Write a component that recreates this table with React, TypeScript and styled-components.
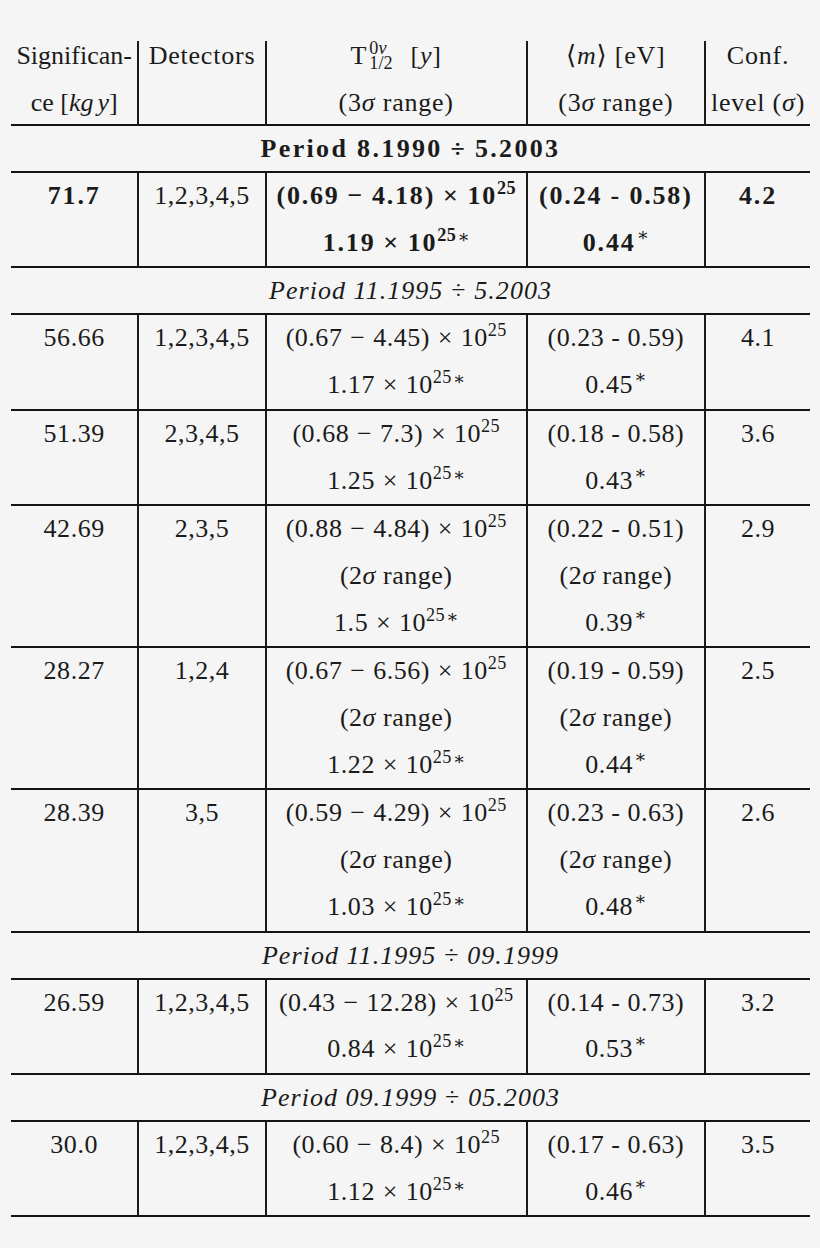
import React from 'react';
import styled, { createGlobalStyle } from 'styled-components';

const GlobalStyle = createGlobalStyle`
  html,
  body {
    margin: 0;
    padding: 0;
    background: #f5f5f5;
  }
  body {
    font-family: 'Liberation Serif', 'DejaVu Serif', serif;
    color: #1b1b1b;
  }
`;

type DataRowProps = {
  kind: 'data';
  bold?: boolean;
  sig: string;
  det: string;
  half: React.ReactNode[];
  mass: React.ReactNode[];
  conf: string;
};

type PeriodRowProps = {
  kind: 'period';
  bold?: boolean;
  from: string;
  to: string;
};

const I = styled.i`
  font-style: italic;
`;

const Op = styled.span`
  font-style: normal;
  margin: 0 0.3em;
`;

const Sup = styled.sup`
  font-size: 0.7em;
  line-height: 0;
  vertical-align: 10px;
  letter-spacing: 0.02em;
`;

const Ast = styled.sup<{ $raise: number }>`
  font-size: 0.7em;
  line-height: 0;
  vertical-align: ${(p) => p.$raise}px;
  font-weight: 400;
  letter-spacing: 0;
  margin-left: 1px;
`;

const range = (a: string, b: string) => (
  <>
    ({a}
    <Op>−</Op>
    {b})<Op>×</Op>10<Sup>25</Sup>
  </>
);

const central = (v: string) => (
  <>
    {v}
    <Op>×</Op>10<Sup>25</Sup>
    <Ast $raise={8}>∗</Ast>
  </>
);

const mass = (v: string) => (
  <>
    {v}
    <Ast $raise={10}>∗</Ast>
  </>
);

const twoSigma = (
  <>
    (2<I>σ</I> range)
  </>
);

const rows: (DataRowProps | PeriodRowProps)[] = [
  { kind: 'period', bold: true, from: '8.1990', to: '5.2003' },
  {
    kind: 'data',
    bold: true,
    sig: '71.7',
    det: '1,2,3,4,5',
    half: [range('0.69', '4.18'), central('1.19')],
    mass: ['(0.24 - 0.58)', mass('0.44')],
    conf: '4.2',
  },
  { kind: 'period', from: '11.1995', to: '5.2003' },
  {
    kind: 'data',
    sig: '56.66',
    det: '1,2,3,4,5',
    half: [range('0.67', '4.45'), central('1.17')],
    mass: ['(0.23 - 0.59)', mass('0.45')],
    conf: '4.1',
  },
  {
    kind: 'data',
    sig: '51.39',
    det: '2,3,4,5',
    half: [range('0.68', '7.3'), central('1.25')],
    mass: ['(0.18 - 0.58)', mass('0.43')],
    conf: '3.6',
  },
  {
    kind: 'data',
    sig: '42.69',
    det: '2,3,5',
    half: [range('0.88', '4.84'), twoSigma, central('1.5')],
    mass: ['(0.22 - 0.51)', twoSigma, mass('0.39')],
    conf: '2.9',
  },
  {
    kind: 'data',
    sig: '28.27',
    det: '1,2,4',
    half: [range('0.67', '6.56'), twoSigma, central('1.22')],
    mass: ['(0.19 - 0.59)', twoSigma, mass('0.44')],
    conf: '2.5',
  },
  {
    kind: 'data',
    sig: '28.39',
    det: '3,5',
    half: [range('0.59', '4.29'), twoSigma, central('1.03')],
    mass: ['(0.23 - 0.63)', twoSigma, mass('0.48')],
    conf: '2.6',
  },
  { kind: 'period', from: '11.1995', to: '09.1999' },
  {
    kind: 'data',
    sig: '26.59',
    det: '1,2,3,4,5',
    half: [range('0.43', '12.28'), central('0.84')],
    mass: ['(0.14 - 0.73)', mass('0.53')],
    conf: '3.2',
  },
  { kind: 'period', from: '09.1999', to: '05.2003' },
  {
    kind: 'data',
    sig: '30.0',
    det: '1,2,3,4,5',
    half: [range('0.60', '8.4'), central('1.12')],
    mass: ['(0.17 - 0.63)', mass('0.46')],
    conf: '3.5',
  },
];

const App = () => {
  return (
    <Page>
      <GlobalStyle />
      <Table>
        <HeaderRow>
          <Cell $first>
            <HeadLines $tight>
              <span>Significan-</span>
              <span>
                ce [<I>kg</I>
                <ThinSpace />
                <I>y</I>]
              </span>
            </HeadLines>
          </Cell>
          <Cell>
            <HeadLines>
              <span>Detectors</span>
            </HeadLines>
          </Cell>
          <Cell>
            <HeadLines>
              <span>
                T
                <Scripts>
                  <span>
                    0<I>ν</I>
                  </span>
                  <span>1/2</span>
                </Scripts>
                [<I>y</I>]
              </span>
              <span>
                (3<I>σ</I> range)
              </span>
            </HeadLines>
          </Cell>
          <Cell>
            <HeadLines>
              <span>
                ⟨<I>m</I>⟩ [eV]
              </span>
              <span>
                (3<I>σ</I> range)
              </span>
            </HeadLines>
          </Cell>
          <Cell>
            <HeadLines>
              <span>Conf.</span>
              <span>
                level (<I>σ</I>)
              </span>
            </HeadLines>
          </Cell>
        </HeaderRow>

        {rows.map((row, i) =>
          row.kind === 'period' ? (
            <PeriodRow key={i} $bold={row.bold}>
              Period {row.from}
              <Op>÷</Op>
              {row.to}
            </PeriodRow>
          ) : (
            <DataRow key={i}>
              <Cell $first $bold={row.bold}>
                <span>{row.sig}</span>
              </Cell>
              <Cell>
                <span>{row.det}</span>
              </Cell>
              <Cell $bold={row.bold}>
                {row.half.map((line, j) => (
                  <span key={j}>{line}</span>
                ))}
              </Cell>
              <Cell $bold={row.bold}>
                {row.mass.map((line, j) => (
                  <span key={j}>{line}</span>
                ))}
              </Cell>
              <Cell $bold={row.bold}>
                <span>{row.conf}</span>
              </Cell>
            </DataRow>
          ),
        )}
      </Table>
    </Page>
  );
};

export default App;

const Page = styled.div`
  box-sizing: border-box;
  min-height: 1248px;
  padding: 41px 0 0 11px;
`;

const Table = styled.div`
  width: 799px;
  display: flex;
  flex-direction: column;
  font-family: 'Liberation Serif', 'DejaVu Serif', serif;
  font-size: 26px;
`;

const DataRow = styled.div`
  display: grid;
  grid-template-columns: 126.3px 127.4px 261px 178.3px 106px;
  border-bottom: 2px solid #141414;
`;

const HeaderRow = styled(DataRow)`
  height: 85px;
  box-sizing: border-box;
`;

const Cell = styled.div<{ $first?: boolean; $bold?: boolean }>`
  display: flex;
  flex-direction: column;
  align-items: center;
  border-left: ${(p) => (p.$first ? 'none' : '2px solid #1c1c1c')};
  line-height: 46.7px;
  white-space: nowrap;
  font-weight: ${(p) => (p.$bold ? 700 : 400)};
  letter-spacing: ${(p) => (p.$bold ? '0.07em' : '0.02em')};
`;

const HeadLines = styled.div<{ $tight?: boolean }>`
  margin-top: -8px;
  display: flex;
  flex-direction: column;
  align-items: center;
  letter-spacing: ${(p) => (p.$tight ? '0' : '0.03em')};
`;

const ThinSpace = styled.span`
  display: inline-block;
  width: 4px;
`;

const Scripts = styled.span`
  display: inline-flex;
  flex-direction: column;
  align-items: flex-start;
  font-size: 0.7em;
  line-height: 15px;
  vertical-align: 10px;
  margin: 0 18px 0 2px;
  letter-spacing: 0;
`;

const PeriodRow = styled.div<{ $bold?: boolean }>`
  height: 45px;
  line-height: 45px;
  text-align: center;
  white-space: nowrap;
  border-bottom: 2px solid #141414;
  font-style: ${(p) => (p.$bold ? 'normal' : 'italic')};
  font-weight: ${(p) => (p.$bold ? 700 : 400)};
  letter-spacing: ${(p) => (p.$bold ? '0.09em' : '0.04em')};
`;
